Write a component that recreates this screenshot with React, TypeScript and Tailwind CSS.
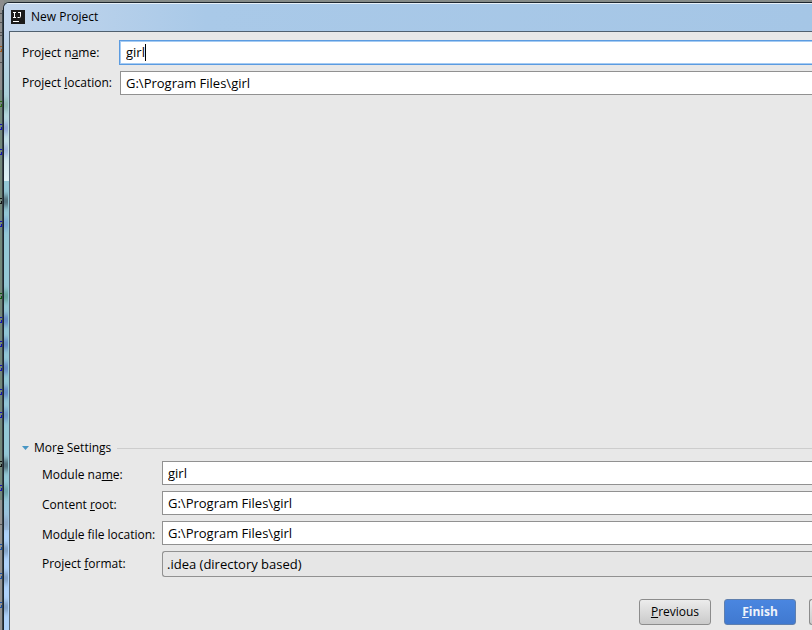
import { useState, type ReactNode } from "react";
import clsx from "clsx";

const PROJECT_PATH = "G:\\Program Files\\girl";

const FIELD = "h-6 min-w-0 flex-1 border border-r-0 border-[#919191] bg-white pl-[5px] pb-px text-[13px] outline-none";

// Slivers of the editor that stay visible left of the dialog
const CODE_MARKS = [
    { y: 49, color: "#a05a1e" },
    { y: 104, color: "#2d6a14" },
    { y: 127, color: "#1414b4" },
    { y: 152, color: "#1414b4" },
    { y: 201, color: "#111111" },
    { y: 224, color: "#1414b4" },
    { y: 296, color: "#0f5a0f" },
    { y: 320, color: "#1414b4" },
    { y: 344, color: "#1414b4" },
    { y: 368, color: "#1414b4" },
    { y: 392, color: "#1414b4" },
    { y: 415, color: "#1414b4" },
    { y: 464, color: "#111111" },
    { y: 488, color: "#1414b4" },
    { y: 547, color: "#1e50a0" },
    { y: 576, color: "#1e50a0" },
    { y: 605, color: "#1e50a0" },
];

const GLASS_SPOTS = [
    { y: 105, color: "#8fb8b4" },
    { y: 128, color: "#93a9d8" },
    { y: 150, color: "#a3b9df" },
    { y: 201, color: "#4d6b76" },
    { y: 224, color: "#7ba8d4" },
    { y: 296, color: "#63a39b" },
    { y: 320, color: "#6287c6" },
    { y: 344, color: "#6287c6" },
    { y: 368, color: "#6287c6" },
    { y: 392, color: "#6287c6" },
    { y: 415, color: "#6c94c8" },
    { y: 465, color: "#4d6b76" },
    { y: 491, color: "#6ea5ac" },
    { y: 523, color: "#8ea9c8" },
    { y: 550, color: "#82a0c4" },
    { y: 578, color: "#82a0c4" },
    { y: 607, color: "#82a0c4" },
];

function EditorEdge() {
    return (
        <svg className="absolute left-0 top-0 h-full w-1" aria-hidden="true">
            <rect y="0" width="4" height="90" fill="#8d8d8d" />
            <rect y="90" width="4" height="410" fill="#71877a" />
            <rect y="500" width="4" height="2000" fill="#929292" />
            {[13, 22, 32, 35, 62, 524].map(y => (
                <rect key={y} y={y} width="2" height="1" fill="#555" />
            ))}
            {CODE_MARKS.map(m => (
                <g key={m.y} fill={m.color}>
                    <rect y={m.y - 3} width="2" height="1" />
                    <rect y={m.y + 2} width="2" height="1" />
                    <rect x="1" y={m.y} width="1" height="2" />
                </g>
            ))}
            <rect x="2" y="10" width="1" height="3000" fill="#39444a" />
        </svg>
    );
}

function GlassEdge() {
    return (
        <svg className="absolute left-0 top-7 h-full w-[5px]" viewBox="0 31 5 2000" preserveAspectRatio="xMinYMin slice" aria-hidden="true">
            <defs>
                <linearGradient id="glassTop" x2="0" y2="1">
                    <stop offset="0" stopColor="#bfd4ec" />
                    <stop offset="0.45" stopColor="#a9d0d8" />
                    <stop offset="1" stopColor="#e0f1f5" />
                </linearGradient>
                <linearGradient id="glassLow" x2="0" y2="1">
                    <stop offset="0" stopColor="#94c8d6" />
                    <stop offset="1" stopColor="#9fc0e2" />
                </linearGradient>
                <filter id="soft" x="-1" y="-1" width="3" height="3">
                    <feGaussianBlur stdDeviation="0.6 3" />
                </filter>
            </defs>
            <rect y="31" width="5" height="150" fill="url(#glassTop)" />
            <rect y="181" width="5" height="309" fill="#94c8d6" />
            <rect y="490" width="5" height="40" fill="url(#glassLow)" />
            <rect y="530" width="5" height="2000" fill="#afd3fb" />
            {GLASS_SPOTS.map(s => (
                <rect key={s.y} x="0" y={s.y - 5} width="4" height="10" fill={s.color} filter="url(#soft)" />
            ))}
        </svg>
    );
}

function AppIcon() {
    return (
        <svg className="size-[14px]" viewBox="0 0 14 14" aria-hidden="true">
            <rect width="14" height="14" fill="#1b1b1b" />
            <path d="M2 2.5h3M3.5 2.5v5M2 7.5h3M7 2.5h3M9.5 2.5v4q0 1-1 1H6.5" fill="none" stroke="#fff" strokeWidth="1" />
            <rect x="2" y="11" width="6" height="1" fill="#fff" />
        </svg>
    );
}

function Row({ id, label, nested, className, children }: {
    id: string;
    label: ReactNode;
    nested?: boolean;
    className?: string;
    children: ReactNode;
}) {
    return (
        <div className="flex items-center">
            <label htmlFor={id} className={clsx("shrink-0 whitespace-nowrap", nested ? "w-[120px]" : "w-[98px]", className)}>
                {label}
            </label>
            {children}
        </div>
    );
}

export default function App() {
    const [name, setName] = useState("girl");
    const [location, setLocation] = useState(PROJECT_PATH);
    const [moduleName, setModuleName] = useState("girl");
    const [contentRoot, setContentRoot] = useState(PROJECT_PATH);
    const [moduleFile, setModuleFile] = useState(PROJECT_PATH);
    const [expanded, setExpanded] = useState(true);

    return (
        <div className="relative flex min-h-screen overflow-hidden bg-[#858b88] pl-[3px] pt-[2px] font-['Open_Sans','Noto_Sans_CJK_SC',sans-serif] text-[12px] leading-[18px] text-black">
            <EditorEdge />

            {/* Dialog window */}
            <div className="relative flex min-w-0 flex-1 flex-col rounded-tl-md border-l border-t border-[#1d262e] bg-[#a6c6e6]">
                <div className="relative flex min-w-0 flex-1 flex-col overflow-hidden rounded-tl-[5px]">
                    <header className="flex h-7 items-center gap-[6px] border-t border-[#e6f0f8] bg-linear-to-r from-[#c3d6ec] via-[#a9c9e8] via-25% to-[#a5c6e6] pb-[2px] pl-[7px]">
                        <AppIcon />
                        <h1>New Project</h1>
                    </header>
                    <GlassEdge />

                    <main className="relative ml-[5px] flex flex-1 flex-col border-l border-t border-[#50606f] bg-[#e8e8e8] pb-[5px] pl-3 pt-[9px]">
                        <div className="flex flex-col gap-[7px]">
                            <Row id="project-name" label={<>Project n<u>a</u>me:</>}>
                                <div className="relative -mr-1 flex min-w-0 flex-1">
                                    <input
                                        id="project-name"
                                        value={name}
                                        onChange={e => setName(e.target.value)}
                                        className="h-[23px] min-w-0 flex-1 bg-white pb-px pl-[6px] text-[13px] shadow-[0_0_0_1px_#5b9be0,inset_0_0_0_1px_#a5cbf3] outline-none"
                                    />
                                    <span className="absolute left-[25px] top-[3px] h-[17px] w-px bg-black" />
                                </div>
                            </Row>
                            <Row id="project-location" label={<>Project <u>l</u>ocation:</>}>
                                <input id="project-location" value={location} onChange={e => setLocation(e.target.value)} className={FIELD} />
                            </Row>
                        </div>

                        <section className="mt-auto">
                            <div className="flex items-center gap-[6px]">
                                <button type="button" aria-expanded={expanded} onClick={() => setExpanded(!expanded)} className="flex items-center gap-[5px]">
                                    <svg className="h-1 w-[7px]" viewBox="0 0 7 4" aria-hidden="true">
                                        <path d="M0 0h7L3.5 4z" fill="#4796c4" />
                                    </svg>
                                    <span>Mor<u>e</u> Settings</span>
                                </button>
                                <div className="h-px flex-1 bg-[#cdcdcd]" />
                            </div>

                            {expanded && (
                                <div className="mt-1 flex flex-col gap-[6px] pl-5">
                                    <Row nested id="module-name" className="pt-[3px]" label={<>Module na<u>m</u>e:</>}>
                                        <input id="module-name" value={moduleName} onChange={e => setModuleName(e.target.value)} className={FIELD} />
                                    </Row>
                                    <Row nested id="content-root" className="pt-[3px]" label={<>Content <u>r</u>oot:</>}>
                                        <input id="content-root" value={contentRoot} onChange={e => setContentRoot(e.target.value)} className={FIELD} />
                                    </Row>
                                    <Row nested id="module-file" className="pt-[3px]" label={<>Mod<u>u</u>le file location:</>}>
                                        <input id="module-file" value={moduleFile} onChange={e => setModuleFile(e.target.value)} className={FIELD} />
                                    </Row>
                                    <Row nested id="project-format" label={<>Project <u>f</u>ormat:</>}>
                                        <select id="project-format" className="h-[26px] min-w-0 flex-1 appearance-none rounded-l-[3px] border border-r-0 border-[#919191] bg-[#e6e6e6] pb-px pl-1 text-[13px] outline-none">
                                            <option>.idea (directory based)</option>
                                            <option>.ipr (file based)</option>
                                        </select>
                                    </Row>
                                </div>
                            )}
                        </section>

                        <footer className="mt-[22px] flex justify-end gap-[13px]">
                            <button type="button" className="h-[26px] w-[72px] rounded-[3px] border border-[#8c8c8c] bg-linear-to-b from-[#ececec] to-[#cacaca]">
                                <u>P</u>revious
                            </button>
                            <button type="button" className="h-[26px] w-[72px] rounded-[3px] border border-[#5f7fae] bg-linear-to-b from-[#4a86e0] to-[#4079d0] font-bold text-[#f0f4fa]">
                                <u>F</u>inish
                            </button>
                            <button type="button" aria-label="Cancel" className="h-[26px] w-[3px] rounded-l-[3px] border border-r-0 border-[#8c8c8c] bg-linear-to-b from-[#ececec] to-[#cacaca]" />
                        </footer>
                    </main>
                </div>
            </div>
        </div>
    );
}
